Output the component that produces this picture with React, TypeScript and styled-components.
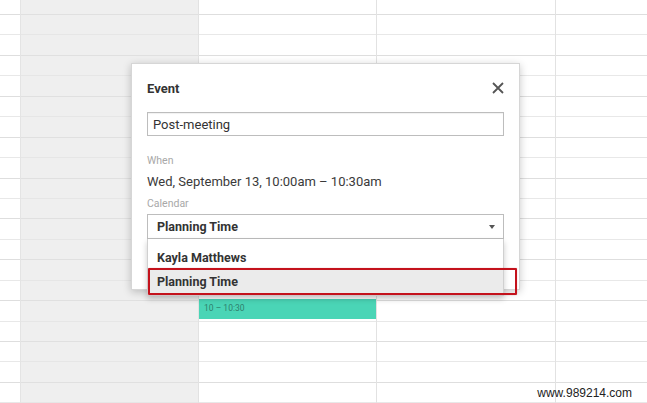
import React from 'react';
import styled, { createGlobalStyle } from 'styled-components';

const GlobalStyle = createGlobalStyle`
  html, body {
    margin: 0;
    padding: 0;
    background: #ffffff;
    font-family: Roboto, "Liberation Sans", Arial, sans-serif;
  }
`;

const Page = styled.div`
  position: relative;
  width: 647px;
  height: 403px;
  overflow: hidden;
  display: flex;
  background: #ffffff;
`;

const Column = styled.div<{ $width: number; $shaded?: boolean }>`
  position: relative;
  box-sizing: border-box;
  flex: ${(p) => (p.$width ? `0 0 ${p.$width}px` : '1 1 auto')};
  display: flex;
  flex-direction: column;
  background: ${(p) => (p.$shaded ? '#efefef' : '#ffffff')};
  border-left: 1px solid ${(p) => (p.$shaded ? '#e4e4e4' : '#e2e2e2')};
  &:first-child {
    border-left: none;
  }
`;

const Slot = styled.div<{ $first?: boolean; $shaded?: boolean; $hour?: boolean }>`
  flex: 0 0 ${(p) => (p.$first ? '15px' : '20.45px')};
  box-sizing: border-box;
  border-bottom: 1px solid
    ${(p) => (p.$shaded ? (p.$hour ? '#e0e0e0' : '#e6e6e6') : p.$hour ? '#dedede' : '#e8e8e8')};
`;

const EventChip = styled.div`
  position: absolute;
  left: 0;
  right: 0;
  top: 299px;
  height: 20px;
  background: #4ad5b6;
  padding: 4px 5px 0;
  box-sizing: border-box;
  font-size: 8.5px;
  color: #2f7f6c;
`;

const Dialog = styled.div`
  position: absolute;
  left: 131px;
  top: 63px;
  width: 389px;
  height: 227px;
  box-sizing: border-box;
  background: #ffffff;
  border: 1px solid #d6d6d6;
  box-shadow: 0 2px 8px rgba(0, 0, 0, 0.22);
  padding: 15px 15px 0 15px;
  display: flex;
  flex-direction: column;
`;

const Header = styled.div`
  display: flex;
  align-items: center;
  justify-content: space-between;
  height: 18px;
`;

const Title = styled.div`
  font-size: 13px;
  font-weight: 700;
  color: #333333;
`;

const CloseButton = styled.div`
  width: 18px;
  height: 18px;
  display: flex;
  align-items: center;
  justify-content: center;
  margin-right: -3px;
`;

const TextInput = styled.div`
  margin-top: 15px;
  height: 24px;
  box-sizing: border-box;
  border: 1px solid #bdbdbd;
  box-shadow: inset 0 1px 1px rgba(0, 0, 0, 0.06);
  padding-left: 5px;
  display: flex;
  align-items: center;
  font-size: 13px;
  color: #333333;
`;

const Label = styled.div<{ $gap: number }>`
  margin-top: ${(p) => p.$gap}px;
  font-size: 10.5px;
  color: #a8a8a8;
  line-height: 13px;
`;

const Value = styled.div`
  margin-top: 7px;
  font-size: 13px;
  color: #3a3a3a;
  line-height: 15px;
`;

const SelectWrap = styled.div`
  position: relative;
  margin-top: 4px;
`;

const SelectBox = styled.div`
  height: 25px;
  box-sizing: border-box;
  border: 1px solid #bdbdbd;
  padding: 0 8px 0 9px;
  display: flex;
  align-items: center;
  justify-content: space-between;
  font-size: 12.5px;
  font-weight: 700;
  color: #333333;
`;

const Caret = styled.div`
  width: 0;
  height: 0;
  border-left: 3.5px solid transparent;
  border-right: 3.5px solid transparent;
  border-top: 4px solid #555555;
`;

const Menu = styled.div`
  position: absolute;
  top: 25px;
  left: 0;
  right: 0;
  background: #ffffff;
  border: 1px solid #d0d0d0;
  border-top: none;
  box-shadow: 0 3px 6px rgba(0, 0, 0, 0.2);
  padding: 6px 0 2px;
  z-index: 2;
`;

const Option = styled.div<{ $active?: boolean }>`
  position: relative;
  height: 24px;
  display: flex;
  align-items: center;
  padding-left: 9px;
  font-size: 12.5px;
  font-weight: 700;
  color: #333333;
  background: ${(p) => (p.$active ? '#ebebeb' : 'transparent')};
`;

const Highlight = styled.div`
  position: absolute;
  left: 0;
  top: -1px;
  right: -14px;
  bottom: -2px;
  border: 2.5px solid #c4121c;
  border-radius: 1px;
  box-shadow: 0 0 1px rgba(196, 18, 28, 0.5);
`;

const Watermark = styled.div`
  position: absolute;
  right: 15px;
  bottom: 3px;
  font-family: "Liberation Sans", Arial, sans-serif;
  font-size: 12px;
  color: #222222;
`;

const columns = [
  { width: 20, shaded: false },
  { width: 178, shaded: true },
  { width: 178, shaded: false, event: true },
  { width: 179, shaded: false },
  { width: 0, shaded: false },
];

const slots = Array.from({ length: 20 }, (_, i) => i);

export default function App() {
  return (
    <>
      <GlobalStyle />
      <Page>
        {columns.map((col, ci) => (
          <Column key={ci} $width={col.width} $shaded={col.shaded}>
            <Slot $first $shaded={col.shaded} $hour />
            {slots.map((s) => (
              <Slot key={s} $shaded={col.shaded} $hour={s % 2 === 1} />
            ))}
            {col.event && <EventChip>10 – 10:30</EventChip>}
          </Column>
        ))}

        <Dialog>
          <Header>
            <Title>Event</Title>
            <CloseButton>
              <svg width="12" height="12" viewBox="0 0 12 12">
                <path d="M1 1 L11 11 M11 1 L1 11" stroke="#555555" strokeWidth="1.8" fill="none" />
              </svg>
            </CloseButton>
          </Header>
          <TextInput>Post-meeting</TextInput>
          <Label $gap={18}>When</Label>
          <Value>Wed, September 13, 10:00am – 10:30am</Value>
          <Label $gap={8}>Calendar</Label>
          <SelectWrap>
            <SelectBox>
              Planning Time
              <Caret />
            </SelectBox>
            <Menu>
              <Option>Kayla Matthews</Option>
              <Option $active>
                Planning Time
                <Highlight />
              </Option>
            </Menu>
          </SelectWrap>
        </Dialog>

        <Watermark>www.989214.com</Watermark>
      </Page>
    </>
  );
}
